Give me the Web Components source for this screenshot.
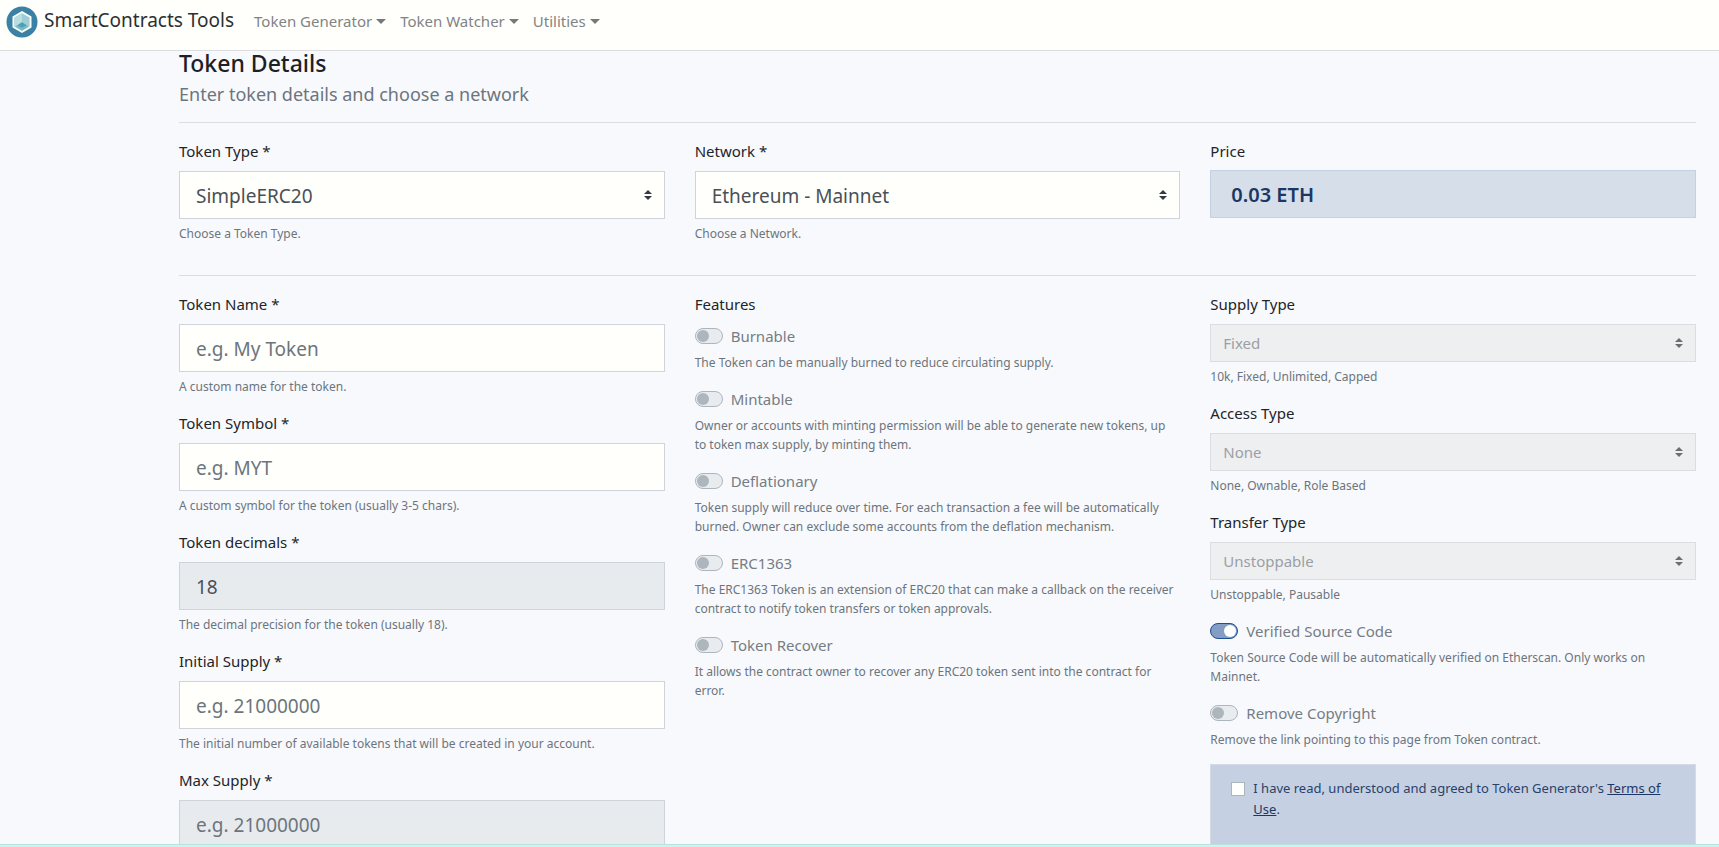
<!DOCTYPE html>
<html lang="en">
<head>
<meta charset="utf-8">
<meta name="viewport" content="width=device-width, initial-scale=1">
<title>SmartContracts Tools - Token Generator</title>
<style>
  :root {
    --surface: #fffffb;
    --page: #f8f9fc;
    --line: #dbdde1;
    --text: #212529;
    --muted: #6c757d;
    --field-text: #495057;
    --field-border: #ced4da;
    --navy: #1c3763;
  }
  html { scrollbar-width: none; }
  body {
    margin: 0;
    background: var(--page);
    color: var(--text);
    font: 15px/24px "Noto Sans", "Open Sans", sans-serif;
  }
</style>
</head>
<body>
<token-page></token-page>

<script>
const define = (name, html, setup) => {
  const template = document.createElement('template');
  template.innerHTML = html;
  customElements.define(name, class extends HTMLElement {
    constructor() {
      super();
      this.attachShadow({ mode: 'open' }).append(template.content.cloneNode(true));
    }
    connectedCallback() {
      if (setup) setup(this, this.shadowRoot);
    }
  });
};

const fieldStyle = `
  * { box-sizing: border-box; }
  :host { display: block; margin-bottom: 15px; }
  label { display: block; margin-bottom: 8px; }
  small {
    display: block; margin-top: 5px; padding-right: 4px;
    font-size: 12px; line-height: 19px; color: var(--muted);
  }
`;

define('brand-logo', `
  <style>
    :host { display: block; flex: none; }
    svg { display: block; }
  </style>
  <svg width="32" height="32" viewBox="0 0 32 32" aria-hidden="true">
    <circle cx="16" cy="16" r="15.5" fill="#3b80a5"/>
    <path d="M16 5 25.500 10.400v11.200L16 27 6.500 21.600V10.400z" fill="#f8fdf6"/>
    <path d="M16 7.200 23.600 11.500v9L16 24.800 8.400 20.500v-9z" fill="#9fcdd5"/>
    <path d="M16 7.200v9.600L8.400 20.500v-9z" fill="#b9dde1"/>
    <path d="M16 16.200 22.500 20.500 16 24.800 9.500 20.500z" fill="#73b9c6"/>
    <path d="M16 16.200 20.500 19.200 16 21.500 11.500 19.200z" fill="#4f9fb5"/>
  </svg>`);

define('nav-menu', `
  <style>
    :host { display: block; }
    button {
      display: flex; align-items: center; gap: 4px; padding: 0; border: 0;
      background: none; font: inherit; color: #828385; cursor: pointer;
    }
    button::after {
      content: ""; border: 5px solid transparent; border-top-color: #77787a; border-bottom: 0;
    }
  </style>
  <button type="button" aria-haspopup="true"><slot></slot></button>`);

define('app-navbar', `
  <style>
    :host {
      display: block; position: sticky; top: 0; z-index: 2;
      background: var(--surface); border-bottom: 1px solid var(--line);
    }
    nav { display: flex; align-items: center; padding: 6px 6px 12px; }
    a {
      display: flex; align-items: center; gap: 6px; margin-right: 20px;
      font-size: 19px; line-height: 32px; color: #2c2f33; text-decoration: none;
    }
    .text { padding-bottom: 4px; line-height: 28px; }
    .menus { display: flex; gap: 14px; padding-bottom: 2px; }
  </style>
  <nav>
    <a href="#"><brand-logo></brand-logo><span class="text"><slot name="brand"></slot></span></a>
    <div class="menus"><slot></slot></div>
  </nav>`);

define('section-title', `
  <style>
    :host { display: block; margin-bottom: 13px; }
    h1 { margin: 0 0 4px; font-size: 23px; line-height: 24px; font-weight: 500; color: #1d2024; }
    p { margin: 0; font-size: 18px; line-height: 30px; color: var(--muted); }
  </style>
  <h1><slot></slot></h1>
  <p><slot name="lead"></slot></p>`);

define('form-row', `
  <style>
    :host {
      display: grid; grid-template-columns: repeat(3, minmax(0, 1fr)); column-gap: 30px;
      margin-bottom: 17px; padding-top: 16px; border-top: 1px solid var(--line);
    }
  </style>
  <slot></slot>`);

define('text-field', `
  <style>${fieldStyle}
    input {
      display: block; width: 100%; height: 48px; padding: 10px 16px 8px; margin: 0;
      border: 1px solid var(--field-border); border-radius: 0;
      background: var(--surface); font: inherit; font-size: 19px; color: var(--field-text);
    }
    input::placeholder { color: var(--muted); opacity: 1; }
    input:disabled, input:read-only { background: #e8ebee; }
  </style>
  <label for="control"></label>
  <input id="control" type="text" aria-describedby="help">
  <small id="help"><slot></slot></small>`,
  (host, root) => {
    const input = root.querySelector('input');
    root.querySelector('label').textContent = host.getAttribute('label');
    input.placeholder = host.getAttribute('placeholder') || '';
    input.value = host.getAttribute('value') || '';
    input.readOnly = host.hasAttribute('readonly');
  });

define('select-field', `
  <style>${fieldStyle}
    select {
      display: block; width: 100%; height: 48px; padding: 10px 28px 8px 16px; margin: 0;
      appearance: none; border: 1px solid var(--field-border); border-radius: 0; opacity: 1;
      background: var(--surface) url("data:image/svg+xml,%3Csvg xmlns='http://www.w3.org/2000/svg' viewBox='0 0 4 5'%3E%3Cpath fill='%23343a40' d='M2 0L0 2h4zm0 5L0 3h4z'/%3E%3C/svg%3E") no-repeat right 12px center / 8px 10px;
      font: inherit; font-size: 19px; color: var(--field-text);
    }
    select:disabled {
      height: 38px; padding: 6px 28px 6px 12px; font-size: 15px; color: #9b9fa4;
      border-color: #dbdde1; background-color: #eeeff1;
      background-image: url("data:image/svg+xml,%3Csvg xmlns='http://www.w3.org/2000/svg' viewBox='0 0 4 5'%3E%3Cpath fill='%236b6e72' d='M2 0L0 2h4zm0 5L0 3h4z'/%3E%3C/svg%3E");
    }
  </style>
  <label for="control"></label>
  <select id="control" aria-describedby="help"></select>
  <small id="help"><slot></slot></small>`,
  (host, root) => {
    const select = root.querySelector('select');
    root.querySelector('label').textContent = host.getAttribute('label');
    select.replaceChildren(...host.getAttribute('options').split('|').map(t => new Option(t)));
    select.value = host.getAttribute('value');
    select.disabled = host.hasAttribute('disabled');
  });

define('switch-field', `
  <style>${fieldStyle}
    label { display: flex; align-items: center; gap: 8px; margin: 0; color: #757d85; }
    input {
      appearance: none; flex: none; display: flex; width: 28px; height: 16px; margin: 0; padding: 1px;
      border: 1px solid #adb5bd; border-radius: 8px; background: #e9ecef;
    }
    input::before { content: ""; width: 12px; height: 12px; border-radius: 50%; background: #adb5bd; }
    input:checked { justify-content: flex-end; border-color: #1f4e92; background: #839dc4; }
    input:checked::before { background: var(--surface); }
  </style>
  <label><input type="checkbox" role="switch" aria-describedby="help"><span></span></label>
  <small id="help"><slot></slot></small>`,
  (host, root) => {
    const input = root.querySelector('input');
    root.querySelector('span').textContent = host.getAttribute('label');
    input.checked = host.hasAttribute('checked');
    input.disabled = host.hasAttribute('disabled');
  });

define('price-box', `
  <style>
    :host { display: block; }
    .name { margin-bottom: 7px; }
    output {
      display: block; padding: 9px 20px 7px; border: 1px solid #c4d1e4; background: #d6dfe9;
      font-size: 20px; line-height: 30px; font-weight: 600; color: var(--navy);
    }
  </style>
  <div class="name" id="name">Price</div>
  <output aria-labelledby="name"><slot></slot></output>`);

define('field-heading', `
  <style>
    :host { display: block; margin-bottom: 8px; }
    h2 { margin: 0; font: inherit; }
  </style>
  <h2><slot></slot></h2>`);

define('terms-box', `
  <style>
    :host {
      display: block; min-height: 120px; box-sizing: border-box; padding: 13px 20px;
      border: 1px solid #d6dbe3; background: #c5d1e3; font-size: 13px; line-height: 21px; color: #2a4169;
    }
    label { display: flex; align-items: flex-start; gap: 8px; }
    input {
      appearance: none; flex: none; width: 14px; height: 14px; margin: 4px 0 0;
      border: 1px solid #adb5bd; background: var(--surface);
    }
    input:checked { background: #1f4e92; }
    ::slotted(a) { color: var(--navy); }
  </style>
  <label><input type="checkbox"><span><slot></slot></span></label>`);

define('status-strip', `
  <style>
    :host {
      display: block; position: fixed; inset: auto 0 0 0; z-index: 3; box-sizing: border-box;
      height: 3px; border-top: 1px solid #b9e3de; background: #cdf3ef;
    }
  </style>`);

define('token-page', `
  <style>
    :host { display: block; }
    main { padding: 0 23px 0 179px; }
  </style>
  <app-navbar>
    <span slot="brand">SmartContracts Tools</span>
    <nav-menu>Token Generator</nav-menu>
    <nav-menu>Token Watcher</nav-menu>
    <nav-menu>Utilities</nav-menu>
  </app-navbar>
  <main>
    <section-title>Token Details<span slot="lead">Enter token details and choose a network</span></section-title>
    <form-row>
      <select-field label="Token Type *" value="SimpleERC20" options="SimpleERC20">Choose a Token Type.</select-field>
      <select-field label="Network *" value="Ethereum - Mainnet" options="Ethereum - Mainnet">Choose a Network.</select-field>
      <price-box>0.03 ETH</price-box>
    </form-row>
    <form-row>
      <div>
        <text-field label="Token Name *" placeholder="e.g. My Token">A custom name for the token.</text-field>
        <text-field label="Token Symbol *" placeholder="e.g. MYT">A custom symbol for the token (usually 3-5 chars).</text-field>
        <text-field label="Token decimals *" value="18" readonly>The decimal precision for the token (usually 18).</text-field>
        <text-field label="Initial Supply *" placeholder="e.g. 21000000">The initial number of available tokens that will be created in your account.</text-field>
        <text-field label="Max Supply *" placeholder="e.g. 21000000" readonly></text-field>
      </div>
      <div>
        <field-heading>Features</field-heading>
        <switch-field label="Burnable" disabled>The Token can be manually burned to reduce circulating supply.</switch-field>
        <switch-field label="Mintable" disabled>Owner or accounts with minting permission will be able to generate new tokens, up to token max supply, by minting them.</switch-field>
        <switch-field label="Deflationary" disabled>Token supply will reduce over time. For each transaction a fee will be automatically burned. Owner can exclude some accounts from the deflation mechanism.</switch-field>
        <switch-field label="ERC1363" disabled>The ERC1363 Token is an extension of ERC20 that can make a callback on the receiver contract to notify token transfers or token approvals.</switch-field>
        <switch-field label="Token Recover" disabled>It allows the contract owner to recover any ERC20 token sent into the contract for error.</switch-field>
      </div>
      <div>
        <select-field label="Supply Type" value="Fixed" options="10k|Fixed|Unlimited|Capped" disabled>10k, Fixed, Unlimited, Capped</select-field>
        <select-field label="Access Type" value="None" options="None|Ownable|Role Based" disabled>None, Ownable, Role Based</select-field>
        <select-field label="Transfer Type" value="Unstoppable" options="Unstoppable|Pausable" disabled>Unstoppable, Pausable</select-field>
        <switch-field label="Verified Source Code" checked disabled>Token Source Code will be automatically verified on Etherscan. Only works on Mainnet.</switch-field>
        <switch-field label="Remove Copyright" disabled>Remove the link pointing to this page from Token contract.</switch-field>
        <terms-box>I have read, understood and agreed to Token Generator's <a href="#terms">Terms of Use</a>.</terms-box>
      </div>
    </form-row>
  </main>
  <status-strip></status-strip>`);
</script>
</body>
</html>
